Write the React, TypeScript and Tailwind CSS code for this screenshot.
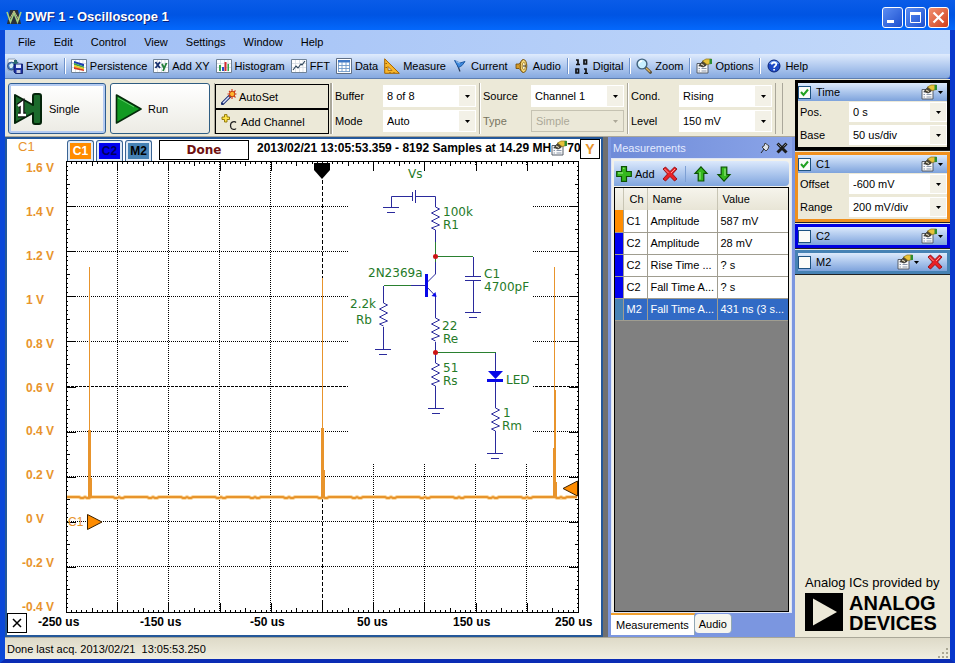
import { useState, type ReactNode } from "react";
import { clsx } from "clsx";

const toolbarItems: { label: string; icon: ReactNode; divider?: boolean }[] = [
  { label: "Export", icon: <ExportIcon /> },
  { label: "Persistence", icon: <PersistenceIcon />, divider: true },
  { label: "Add XY", icon: <XYIcon /> },
  { label: "Histogram", icon: <HistogramIcon /> },
  { label: "FFT", icon: <FftIcon /> },
  { label: "Data", icon: <DataIcon /> },
  { label: "Measure", icon: <MeasureIcon /> },
  { label: "Current", icon: <FlagIcon /> },
  { label: "Audio", icon: <AudioIcon /> },
  { label: "Digital", icon: <DigitalIcon />, divider: true },
  { label: "Zoom", icon: <ZoomIcon />, divider: true },
  { label: "Options", icon: <OptionsIcon />, divider: true },
  { label: "Help", icon: <HelpIcon />, divider: true },
];

const measurements = [
  { ch: "C1", name: "Amplitude", value: "587 mV", color: "bg-[#ff8c00]" },
  { ch: "C2", name: "Amplitude", value: "28 mV", color: "bg-[#0000f0]" },
  { ch: "C2", name: "Rise Time ...", value: "? s", color: "bg-[#0000f0]" },
  { ch: "C2", name: "Fall Time A...", value: "? s", color: "bg-[#0000f0]" },
  { ch: "M2", name: "Fall Time A...", value: "431 ns (3 s...", color: "bg-[#4682b4]" },
];

/* ---------- icons ---------- */

function Icon({ children }: { children: ReactNode }) {
  return (
    <svg viewBox="0 0 16 16" className="size-4 shrink-0" aria-hidden="true">
      {children}
    </svg>
  );
}

function ExportIcon() {
  return (
    <Icon>
      <path d="M1 1h7l2 2v9H1z" fill="#f4f7fb" stroke="#7d8fa8" strokeWidth=".8" />
      <circle cx="4.5" cy="8" r="4" fill="#4a7fc0" stroke="#1f3f77" strokeWidth=".7" />
      <path d="M2 7l3-2 2 2-2 3-2 0z" fill="#d6f0f4" />
      <path d="M7 6h8.5v9.5H8.5L7 14z" fill="#1c2fa0" stroke="#0a1660" strokeWidth=".8" />
      <path d="M9 6.5h5v3.5H9z" fill="#dfe6fb" />
      <path d="M9.5 12h4v3h-4z" fill="#c0c8e0" />
      <path d="M7 2h3v2h2l-3.5 2.5L5 4h2z" fill="#2b6a6e" />
    </Icon>
  );
}

function Frame({ children }: { children: ReactNode }) {
  return (
    <Icon>
      <path d="M.5 1.5h15v13H.5z" fill="#fff" stroke="#6f8297" />
      <path d="M4.5 2v12M8.5 2v12M12 2v12M1 5.5h14M1 9.5h14" stroke="#cfd6de" strokeWidth=".7" />
      {children}
    </Icon>
  );
}

function PersistenceIcon() {
  return (
    <Frame>
      <path d="M3 3l10 3v2.500L3 5z" fill="#1e3fb4" />
      <path d="M3 5l10 3.500V10L3 7z" fill="#3aa34a" />
      <path d="M3 7l10 3v1.500L3 9z" fill="#f2c81c" />
      <path d="M3 9l10 2.500V13L3 11z" fill="#d63a1e" />
    </Frame>
  );
}

function XYIcon() {
  return (
    <Frame>
      <path d="M2.5 4l4.5 6M7 4l-4.5 6" stroke="#18306e" strokeWidth="1.8" />
      <path d="M9 6l2 4M13.5 5l-3.5 8" stroke="#23803a" strokeWidth="1.8" />
    </Frame>
  );
}

function HistogramIcon() {
  return (
    <Frame>
      <path d="M3 7h2v6H3z" fill="#38a348" />
      <path d="M6 9h2v4H6z" fill="#2b51c9" />
      <path d="M8.5 4h2v9h-2z" fill="#d8292f" />
      <path d="M11.5 6h1.5v7h-1.5z" fill="#38a348" />
    </Frame>
  );
}

function FftIcon() {
  return (
    <Frame>
      <path d="M2 12l3-4 2 2 3-4 1 1 3-4" fill="none" stroke="#2c4358" strokeWidth="1.1" />
    </Frame>
  );
}

function DataIcon() {
  return (
    <Icon>
      <path d="M.5 .5h15v15H.5z" fill="#fff" stroke="#5f6f86" />
      <path d="M2 2h12v2.5H2z" fill="#3f79c8" />
      <path d="M2 7.5h12M2 10.5h12M2 13.5h12M2.5 4v10M6 4v10M10 4v10M13.5 4v10" stroke="#6f98c8" strokeWidth=".9" />
    </Icon>
  );
}

function MeasureIcon() {
  return (
    <Icon>
      <path d="M.7 .8L15.3 15.3H.7z" fill="#f8b62a" stroke="#a66400" />
      <path d="M4 8.5l4 4H4z" fill="#bcd4f8" stroke="#a66400" strokeWidth=".8" />
      <path d="M3 5.5h-1.5M3 9.5h-1.5M6 14v1M10 14v1" stroke="#7a4700" strokeWidth=".8" />
    </Icon>
  );
}

function FlagIcon() {
  return (
    <Icon>
      <path d="M4 3l4 10.5" stroke="#2a3c58" strokeWidth="1.2" />
      <path d="M2.5 2.5l5.5 2.5 5-1.500-3 4L6.500 9.500z" fill="#3f8be0" stroke="#16529d" strokeWidth=".9" />
      <path d="M4 3.5l4 1.7" stroke="#b8dcff" strokeWidth=".8" />
    </Icon>
  );
}

function AudioIcon() {
  return (
    <Icon>
      <path d="M2 6h3l4-4.5v13L5 10.5H2z" fill="#d59a28" stroke="#6e4700" strokeWidth=".8" />
      <ellipse cx="9.5" cy="8" rx="3.3" ry="6.5" fill="#f5d675" stroke="#6e4700" strokeWidth=".9" />
      <ellipse cx="9.8" cy="8" rx="1.6" ry="3.6" fill="#fff7d0" stroke="#8a6310" strokeWidth=".7" />
      <path d="M9 8h3" stroke="#333" />
    </Icon>
  );
}

function DigitalIcon() {
  return (
    <Icon>
      <path d="M2 2h2v4M10 11h2v4M2 6.500h4M10 15.500h4" fill="none" stroke="#111" strokeWidth="1.700" />
      <path d="M10 2h2.500v4H10zM2 11h2.500v4H2z" fill="none" stroke="#111" strokeWidth="1.700" />
    </Icon>
  );
}

function ZoomIcon() {
  return (
    <Icon>
      <path d="M9.5 9.5l5 4.8" stroke="#5e553f" strokeWidth="3" strokeLinecap="round" />
      <path d="M10 10l4 3.8" stroke="#e0b35a" strokeWidth="1.3" />
      <circle cx="6" cy="6" r="4.9" fill="#c9efff" stroke="#41617c" strokeWidth="1.4" />
      <path d="M3.2 5.5a3 3 0 0 1 3-2.5" stroke="#fff" strokeWidth="1.3" fill="none" />
    </Icon>
  );
}

function OptionsIcon() {
  return (
    <Icon>
      <path d="M1 5.5h11v9.5H1z" fill="#fafafa" stroke="#555c68" />
      <path d="M2.5 8h1.5M2.5 10.5h1.5M2.5 13h1.5M5.5 10.5h5M5.5 13h5" stroke="#8a97ab" />
      <path d="M3 7.5l4-4.5 4 1.5-1 3-3 1.5z" fill="#504936" stroke="#222" strokeWidth=".7" />
      <path d="M6.5 3L10 1h5.5v4.5L11 6.5z" fill="#e8c23a" stroke="#8c7312" strokeWidth=".7" />
      <path d="M13.5 1H16v5h-2.5z" fill="#2e8c33" />
      <path d="M5 6l3 1.5" stroke="#f3ead0" />
    </Icon>
  );
}

function HelpIcon() {
  return (
    <Icon>
      <circle cx="8" cy="8" r="6" fill="#1d48c4" stroke="#0a2478" />
      <path d="M3 6a5.5 5.5 0 0 1 10 0z" fill="#6f9bf2" />
      <path d="M5.8 6.5C5.8 3.8 10.5 3.8 10.3 6.4 10.2 7.8 8.1 8 8.1 9.7M8.1 11v1.6" fill="none" stroke="#fff" strokeWidth="1.7" />
    </Icon>
  );
}

function DeleteIcon() {
  return (
    <Icon>
      <path d="M1 3l2.5-2L8 5.5 12.5 1 15 3 10.5 8 15 13l-2.5 2L8 10.5 3.5 15 1 13 5.5 8z" fill="#ea2026" stroke="#8f0b10" strokeWidth=".9" />
      <path d="M2.5 3l4 4M13 3L9 7" stroke="#ff9a94" />
    </Icon>
  );
}

function PlusIcon() {
  return (
    <Icon>
      <path d="M5.5 .7h5v4.8h4.8v5h-4.800v4.800h-5v-4.800H.7v-5h4.800z" fill="#35b81e" stroke="#0d5204" strokeWidth="1.2" />
      <path d="M7 2.2h1.5M2 7h5" stroke="#a6f08f" />
    </Icon>
  );
}

function ArrowIcon({ down }: { down?: boolean }) {
  return (
    <Icon>
      <g transform={down ? "rotate(180 8 8)" : undefined}>
        <path d="M8 .8l6 6.5h-3.2V15H5.2V7.3H2z" fill="#35b81e" stroke="#0d5204" strokeWidth="1.2" />
        <path d="M7 6v7.5" stroke="#a6f08f" />
      </g>
    </Icon>
  );
}

function WandIcon() {
  return (
    <Icon>
      <path d="M1.5 14.5L8.5 7.5" stroke="#1d2f70" strokeWidth="3.2" strokeLinecap="round" />
      <path d="M2 14l6-6" stroke="#d7e2ff" strokeWidth="1.4" />
      <path d="M11 0v10M6.5 5h9M8 2l6.5 6.5M14.5 1.5L8 8" stroke="#d4381c" strokeWidth="1.1" />
      <circle cx="11.2" cy="5" r="2.7" fill="#ffb52e" stroke="#c23c10" />
    </Icon>
  );
}

function AddChannelIcon() {
  return (
    <Icon>
      <path d="M3.5 .6h2.5v2.4h2.5v2.5H6v2.5H3.5V5.5H1V3h2.5z" fill="#ffe64a" stroke="#8d7200" strokeWidth=".9" />
      <path d="M15 8.5c-1-1.2-5.5-1.5-5.5 3s4.5 4.5 5.5 3" fill="none" stroke="#222" strokeWidth="1.2" />
    </Icon>
  );
}

function LogoIcon() {
  return (
    <Icon>
      <path d="M4 1h8l3 14H1z" fill="#27313a" />
      <path d="M1 3l3.5 10L8 4l3.5 9L15 3" fill="none" stroke="#a3cf84" strokeWidth="1.6" />
      <path d="M3 11l5-9 5 9" fill="none" stroke="#e8d68c" strokeWidth=".8" />
    </Icon>
  );
}

function Caret() {
  return (
    <svg viewBox="0 0 5 3" className="h-[3px] w-[5px] shrink-0" aria-hidden="true">
      <path d="M0 0h5L2.5 3z" fill="currentColor" />
    </svg>
  );
}

/* ---------- controls ---------- */

function Combo({ label, options, disabled, compact }: { label: string; options: string[]; disabled?: boolean; compact?: boolean }) {
  return (
    <label className="flex items-center">
      <span className={clsx(compact ? "w-[51px] pl-0.5" : "w-12", disabled && "text-[#77745f]")}>{label}</span>
      <span className="relative min-w-0 flex-1">
        <select
          disabled={disabled}
          className={clsx(
            "block w-full appearance-none truncate pl-1 outline-none",
            compact ? "h-5" : "h-[22px]",
            disabled ? "border border-[#c5c2b2] bg-[#ebe8d8] text-[#aca899]" : "bg-white text-black"
          )}
        >
          {options.map((o) => (
            <option key={o}>{o}</option>
          ))}
        </select>
        <span
          className={clsx(
            "pointer-events-none absolute inset-y-px right-px flex w-4 items-center justify-center",
            disabled ? "text-[#aca899]" : "bg-[#f3f1e7]"
          )}
        >
          <Caret />
        </span>
      </span>
    </label>
  );
}

function ComboGroup({ children }: { children: ReactNode }) {
  return (
    <div className="flex w-[148px] flex-col justify-center gap-[3px] border-l border-[#aaa79a] px-[3px] shadow-[inset_1px_0_0_#fff]">
      {children}
    </div>
  );
}

interface ChannelPanelProps {
  label: string;
  frame: string;
  enabled?: boolean;
  removable?: boolean;
  children?: ReactNode;
}

function ChannelPanel({ label, frame, enabled = false, removable, children }: ChannelPanelProps) {
  const [checked, setChecked] = useState(enabled);
  return (
    <section className={clsx("border-[3px] bg-[#ece9d8] shadow-[0_1px_0_#222]", frame)}>
      <header className="flex h-[18px] items-center gap-1 bg-linear-to-b from-[#dceafc] to-[#7ea3dc] pr-1">
        <label className="flex flex-1 items-center gap-[5px]">
          <input type="checkbox" checked={checked} onChange={() => setChecked(!checked)} className="peer sr-only" />
          <span className="flex size-[13px] items-center justify-center border border-[#1d5281] bg-[#fbfbf8] text-[#21a121]">
            {checked && (
              <svg viewBox="0 0 9 9" className="size-[9px]" aria-hidden="true">
                <path d="M1 4l2.5 3L8 1.5" fill="none" stroke="currentColor" strokeWidth="2" />
              </svg>
            )}
          </span>
          {label}
        </label>
        <button aria-label={`${label} options`} className="flex items-center gap-px">
          <OptionsIcon />
          <Caret />
        </button>
        {removable && (
          <button aria-label={`Remove ${label}`} className="ml-1">
            <DeleteIcon />
          </button>
        )}
      </header>
      {children && <div className="flex flex-col gap-[3px] pt-px pb-0.5">{children}</div>}
    </section>
  );
}

/* ---------- plot ---------- */

const gridX = [66, 117, 168, 219, 270, 322, 373, 424, 475, 526, 578];
const gridY = [161, 206, 251, 296, 341, 386, 431, 476, 521, 566, 612];
const voltLabels = ["1.6 V", "1.4 V", "1.2 V", "1 V", "0.8 V", "0.6 V", "0.4 V", "0.2 V", "0 V", "-0.2 V", "-0.4 V"];
const timeLabels = [
  { text: "-250 us", x: 38 },
  { text: "-150 us", x: 140 },
  { text: "-50 us", x: 250 },
  { text: "50 us", x: 357 },
  { text: "150 us", x: 453 },
  { text: "250 us", x: 555 },
];

function tickPath() {
  let d = "";
  for (let i = 0; i <= 100; i++) {
    const x = Math.round(66 + i * 5.12) + 0.5;
    const y = Math.round(161 + i * 4.51) + 0.5;
    const len = i % 10 === 0 ? 10 : i % 5 === 0 ? 5 : 3;
    const side = i % 10 === 0 ? 10 : i % 5 === 0 ? 4 : 2;
    d += `M${x} 161v${len}M${x} 613v-${len}M66 ${y}h${side}M579 ${y}h-${side}`;
  }
  return d;
}

function tracePath() {
  let d = "M67 497";
  for (let x = 69; x <= 578; x += 2) {
    d += `L${x} ${497 + ((x * x * 3) % 17 > 11 ? 1 : 0)}`;
  }
  return d;
}

function Resistor({ x, y }: { x: number; y: number }) {
  return <path d={`M${x} ${y}l4 2-8 4 8 4-8 4 8 4-8 3 4 2`} fill="none" />;
}

function Ground({ x, y }: { x: number; y: number }) {
  return <path d={`M${x - 8} ${y}h16M${x - 4} ${y + 5}h8`} />;
}

function Circuit() {
  return (
    <g>
      <path d="M348 166h185v298H348z" fill="#fff" />
      <g stroke="#2a8030">
        <path d="M435.5 241v21M436 256.5h37M384 285.5h27M436 352.5h60" />
      </g>
      <g stroke="#2a2a9c" fill="none">
        <path d="M391.5 207v-10.5H412M412.5 192v9M415.5 190v13M416 196.5h19.5V207M435.5 230v12" />
        <path d="M473.5 257v19M465 276.5h16M465 280.5h16M473.5 281v31" />
        <path d="M435.5 262v12l-9 9M411 285.5h16M427 287l8.5 9V318M435.5 342v21M435.5 386v22" />
        <path d="M383.5 286v17M383.5 327v22M495.5 353v18M495.5 382v26M495.5 431v22" />
        <Ground x={391} y={207.5} />
        <Ground x={473} y={312.5} />
        <Ground x={383} y={349.5} />
        <Ground x={436} y={408.5} />
        <Ground x={495} y={453.5} />
        <Resistor x={435.5} y={207} />
        <Resistor x={383.5} y={303} />
        <Resistor x={435.5} y={318} />
        <Resistor x={435.5} y={363} />
        <Resistor x={495.5} y={408} />
      </g>
      <g fill="#0808e8">
        <path d="M425 274h3v23h-3zM488 371h15l-7.5 8zM487 379h16v3h-16z" />
        <path d="M436.5 297l-5-1 4-4z" />
      </g>
      <circle cx="435.5" cy="256.5" r="2.5" fill="#cc1414" />
      <circle cx="435.5" cy="352.5" r="2.5" fill="#cc1414" />
      <g fill="#257a28" className="font-['DejaVu_Sans'] text-[12px]">
        <text x="408" y="178">Vs</text>
        <text x="443" y="216">100k</text>
        <text x="443" y="229">R1</text>
        <text x="368" y="277">2N2369a</text>
        <text x="484" y="278">C1</text>
        <text x="484" y="291">4700pF</text>
        <text x="350" y="308">2.2k</text>
        <text x="356" y="324">Rb</text>
        <text x="442" y="330">22</text>
        <text x="443" y="343">Re</text>
        <text x="443" y="372">51</text>
        <text x="443" y="385">Rs</text>
        <text x="506" y="384">LED</text>
        <text x="503" y="417">1</text>
        <text x="502" y="430">Rm</text>
      </g>
    </g>
  );
}

function ScopePlot() {
  return (
    <svg viewBox="7 161 594 474" className="block h-auto w-full" role="img" aria-label="Channel 1 waveform">
      <g stroke="#000" strokeDasharray="1 1">
        {gridX.slice(1, -1).map((x) => (
          <path key={x} d={`M${x}.5 162V612`} strokeDasharray={x === 322 ? "4 2" : undefined} />
        ))}
        {gridY.slice(1, -1).map((y) => (
          <path key={y} d={`M67 ${y}.5H578`} strokeDasharray={y === 386 ? "3 1" : undefined} />
        ))}
      </g>
      <Circuit />
      <path d={tickPath()} stroke="#000" />
      <path d="M66.5 161.5h512v451h-512z" fill="none" stroke="#000" />

      <path d={tracePath()} fill="none" stroke="#fbdca8" strokeWidth="4" />
      <path d={tracePath()} fill="none" stroke="#e8942c" strokeWidth="2" />
      <g fill="#e8942c">
        <path d="M89 267h1v163h-1zM88 430h3v48h1v20h-4z" />
        <path d="M322 278h1v150h-1zM321 428h3v42h1v28h-4z" />
        <path d="M554 267h1v123h-1zM554 390h2v58h-2zM553 448h3v34h1v16h-4z" />
      </g>

      <path d="M314 163h16v7l-8 9-8-9z" />
      <g stroke="#3a2000" fill="#ff8c00">
        <path d="M87.5 514.5v15l14.5-7.5z" />
        <path d="M577.5 481v15l-14.5-7.5z" />
      </g>
      <text x="68" y="526" fill="#e8942c" className="text-[12px]">
        C1
      </text>

      <g className="text-[12px] font-bold">
        {voltLabels.map((v, i) => (
          <text key={v} x={v.startsWith("-") ? 22 : 26} y={172 + Math.round(i * 43.9)} fill="#e8942c">
            {v}
          </text>
        ))}
        {timeLabels.map((t) => (
          <text key={t.text} x={t.x} y="626">
            {t.text}
          </text>
        ))}
      </g>
    </svg>
  );
}

function ChannelToggle({ label, color }: { label: string; color: string }) {
  return (
    <button className="flex h-[21px] w-[27px] rounded-t-[3px] border border-b-0 border-[#3a6494] bg-[#dfeaf6] p-0.5">
      <span className={clsx("flex flex-1 items-center justify-center self-stretch text-xs font-bold", color)}>{label}</span>
    </button>
  );
}

function ScopeWindow() {
  return (
    <div className="relative flex min-w-0 flex-1 flex-col border-2 border-[#24589a] bg-white">
      <div className="flex h-[22px] items-end">
        <span className="w-[60px] self-start pl-[11px] text-[13px] leading-4 text-[#e8942c]">C1</span>
        <div className="flex gap-0.5">
          <ChannelToggle label="C1" color="bg-[#ff8c00] text-white" />
          <ChannelToggle label="C2" color="bg-[#0000f0] text-[#000060]" />
          <ChannelToggle label="M2" color="bg-[#4682b4] text-black" />
        </div>
        <div className="mb-px ml-[7px] flex h-5 w-[90px] items-center justify-center border border-black font-['DejaVu_Sans'] text-xs font-bold text-[#701010]">
          Done
        </div>
        <div className="ml-2 flex min-w-0 flex-1 items-center self-start overflow-hidden text-xs leading-[18px] font-bold whitespace-nowrap">
          2013/02/21 13:05:53.359 - 8192 Samples at 14.29 MH
          <button aria-label="Plot options" className="shrink-0">
            <OptionsIcon />
          </button>
          <span>70</span>
        </div>
        <button className="mr-px size-5 shrink-0 self-start border border-black text-sm leading-4 font-bold text-[#e8942c]">Y</button>
      </div>
      <ScopePlot />
      <button aria-label="X axis" className="absolute bottom-0.5 left-0 flex size-5 items-center justify-center border border-black bg-white">
        <svg viewBox="0 0 10 10" className="size-2.5" aria-hidden="true">
          <path d="M1 1l8 8M9 1L1 9" stroke="#000" strokeWidth="1.5" />
        </svg>
      </button>
    </div>
  );
}

function MeasurementsDock() {
  const [tab, setTab] = useState("Measurements");
  return (
    <aside className="flex w-[187px] shrink-0 flex-col bg-[#7b96e0] px-[3px]">
      <div className="flex h-[21px] items-center justify-between bg-linear-to-r from-[#6f8bd8] to-[#8aa4e8] pr-1 pl-0.5 text-[#e4ebff]">
        Measurements
        <div className="flex items-center gap-1.5">
          <button aria-label="Pin">
            <svg viewBox="0 0 10 12" className="h-3 w-2.5" aria-hidden="true">
              <path d="M5 1l4 3-1 3-2 2-4-4 2-1z" fill="#dfe3ea" stroke="#333" strokeWidth=".9" />
              <path d="M4 7l-3 4" stroke="#222" />
            </svg>
          </button>
          <button aria-label="Close panel">
            <svg viewBox="0 0 12 12" className="size-3" aria-hidden="true">
              <path d="M1.5 1.5l9 9M10.5 1.5l-9 9" stroke="#1c1c1c" strokeWidth="3" />
              <path d="M2 2l3 3M10 2L7.5 4.5" stroke="#98a0ae" strokeWidth=".8" />
            </svg>
          </button>
        </div>
      </div>
      <div className="flex flex-1 flex-col border border-[#dfe6f6] bg-[#f2f1ea] px-0.5 pt-0.5">
        <div className="flex h-[25px] items-center gap-[7px] rounded-r-sm bg-linear-to-b from-[#dce9fc] to-[#80a5de] px-0.5">
          <button className="flex items-center gap-[3px]">
            <PlusIcon />
            Add
          </button>
          <button aria-label="Delete measurement">
            <DeleteIcon />
          </button>
          <span className="h-4 w-px bg-[#7d9fd4]" />
          <button aria-label="Move up">
            <ArrowIcon />
          </button>
          <button aria-label="Move down">
            <ArrowIcon down />
          </button>
        </div>
        <div className="mt-px flex-1 border border-black bg-[#808080]">
          <table className="w-full table-fixed border-collapse">
            <colgroup>
              <col className="w-2" />
              <col className="w-6" />
              <col className="w-[70px]" />
              <col />
            </colgroup>
            <thead>
              <tr className="h-[22px] bg-linear-to-b from-[#f6f4ec] to-[#e8e5d6] text-left">
                <th aria-label="Colour" />
                <th className="border-l border-[#c8c5b4] pl-1.5 font-normal">Ch</th>
                <th className="border-l border-[#c8c5b4] pl-[5px] font-normal">Name</th>
                <th className="border-l border-[#c8c5b4] pl-[5px] font-normal">Value</th>
              </tr>
            </thead>
            <tbody>
              {measurements.map((m, i) => (
                <tr
                  key={i}
                  className={clsx(
                    "h-[22px] border-b border-[#a09d90] whitespace-nowrap",
                    i === 4 ? "bg-[#316ac5] text-white" : "bg-white"
                  )}
                >
                  <td className={m.color} />
                  <td className="border-l border-[#a09d90] pl-[3px]">{m.ch}</td>
                  <td className="overflow-hidden border-l border-[#a09d90] pl-[3px]">{m.name}</td>
                  <td className="overflow-hidden border-l border-[#a09d90] pl-[3px]">{m.value}</td>
                </tr>
              ))}
            </tbody>
          </table>
        </div>
      </div>
      <div role="tablist" className="flex h-6 items-start">
        {["Measurements", "Audio"].map((t) => (
          <button
            key={t}
            role="tab"
            aria-selected={tab === t}
            onClick={() => setTab(t)}
            className={clsx(
              "border-r border-[#91a7b4]",
              tab === t ? "h-[22px] border-t-2 border-t-[#f0a030] bg-white px-[5px]" : "mt-px h-[19px] rounded-sm bg-[#f6f5ef] px-1"
            )}
          >
            {t}
          </button>
        ))}
      </div>
    </aside>
  );
}

function ControlBar() {
  return (
    <div className="flex h-[58px] shrink-0 border-b border-[#aaa79a] pt-1 pb-0.5">
      <div className="flex gap-1 pr-1 pl-[3px]">
        <button className="flex w-[98px] items-center gap-1.5 rounded-[3px] border border-[#2f5d92] bg-linear-to-b from-white to-[#ecebe4] pl-1 shadow-[inset_0_0_0_2px_#b4cbf2]">
          <svg viewBox="0 0 30 34" className="h-[34px] w-[30px]" aria-hidden="true">
            <path d="M2 3l18 10V4q0-2 2-2h4q2 0 2 2v26q0 2-2 2h-4q-2 0-2-2v-9L2 31z" fill="#1c6b2c" stroke="#04240a" strokeWidth="2" strokeLinejoin="round" />
            <path d="M5 14l4-3v12M5 23h8" fill="none" stroke="#111" strokeWidth="5" />
            <path d="M5 14l4-3v12M5 23h8" fill="none" stroke="#fff" strokeWidth="2.5" />
          </svg>
          Single
        </button>
        <button className="flex w-[100px] items-center gap-1.5 rounded-[3px] border border-[#2f5d82] bg-linear-to-b from-white to-[#ecebe4] pl-1">
          <svg viewBox="0 0 27 32" className="h-8 w-[27px]" aria-hidden="true">
            <path d="M1.5 2L26 16 1.5 30z" fill="#129a22" stroke="#052c0b" strokeWidth="1.6" strokeLinejoin="round" />
            <path d="M3 5l16 9" stroke="#5cc965" />
          </svg>
          Run
        </button>
      </div>
      <div className="flex w-[117px] flex-col border-x border-[#aaa79a] pt-px pr-px">
        <button className="flex flex-1 items-center gap-0.5 border border-black pl-[5px]">
          <WandIcon />
          AutoSet
        </button>
        <button className="flex flex-1 items-center gap-1 border border-black pl-[5px]">
          <AddChannelIcon />
          Add Channel
        </button>
      </div>
      <ComboGroup>
        <Combo label="Buffer" options={["8 of 8"]} />
        <Combo label="Mode" options={["Auto", "Normal", "None"]} />
      </ComboGroup>
      <ComboGroup>
        <Combo label="Source" options={["Channel 1", "Channel 2"]} />
        <Combo label="Type" options={["Simple"]} disabled />
      </ComboGroup>
      <ComboGroup>
        <Combo label="Cond." options={["Rising", "Falling"]} />
        <Combo label="Level" options={["150 mV"]} />
      </ComboGroup>
      <div className="w-2 border-x border-[#aaa79a]" />
    </div>
  );
}

function SidePanel() {
  return (
    <aside className="flex w-[155px] shrink-0 flex-col gap-0.5 bg-[#ece9d8] pt-px">
      <ChannelPanel label="Time" frame="border-black" enabled>
        <Combo compact label="Pos." options={["0 s"]} />
        <Combo compact label="Base" options={["50 us/div"]} />
      </ChannelPanel>
      <ChannelPanel label="C1" frame="border-[#f0901e]" enabled>
        <Combo compact label="Offset" options={["-600 mV"]} />
        <Combo compact label="Range" options={["200 mV/div"]} />
      </ChannelPanel>
      <ChannelPanel label="C2" frame="border-[#0000e0]" />
      <ChannelPanel label="M2" frame="border-[#4682b4]" removable />
      <div className="mt-auto pb-1 pl-2.5">
        <p className="text-[13px] leading-5">Analog ICs provided by</p>
        <div className="flex gap-1.5">
          <svg viewBox="0 0 38 38" className="size-[38px] shrink-0" aria-hidden="true">
            <path d="M0 0h38v38H0z" />
            <path d="M8 5.5v27L32 19z" fill="#ece9d8" />
          </svg>
          <p className="text-xl leading-5 font-bold">
            ANALOG
            <br />
            DEVICES
          </p>
        </div>
      </div>
    </aside>
  );
}

function TitleBar() {
  const button = "flex size-[21px] items-center justify-center rounded-[3px] border border-white";
  return (
    <header className="flex h-[30px] items-center gap-[3px] bg-linear-to-b from-[#0a5ce8] via-[#0054e3] to-[#0468fc] pt-1 pr-1.5 pl-1.5 text-white">
      <LogoIcon />
      <h1 className="flex-1 text-[13px] font-bold [text-shadow:1px_1px_#0b1f7a]">DWF 1 - Oscilloscope 1</h1>
      <div className="flex gap-0.5">
        <button aria-label="Minimize" className={clsx(button, "bg-linear-to-br from-[#5b8cf2] to-[#1c4fcf]")}>
          <svg viewBox="0 0 13 13" className="size-[13px]" aria-hidden="true">
            <path d="M1 9h7v3H1z" fill="#fff" />
          </svg>
        </button>
        <button aria-label="Maximize" className={clsx(button, "bg-linear-to-br from-[#5b8cf2] to-[#1c4fcf]")}>
          <svg viewBox="0 0 13 13" className="size-[13px]" aria-hidden="true">
            <path d="M1.5 2v9.5h10V2" fill="none" stroke="#fff" />
            <path d="M1 1h11v3H1z" fill="#fff" />
          </svg>
        </button>
        <button aria-label="Close" className={clsx(button, "bg-linear-to-br from-[#f09070] to-[#d03c14]")}>
          <svg viewBox="0 0 13 13" className="size-[13px]" aria-hidden="true">
            <path d="M1.5 1.5l10 10M11.5 1.5l-10 10" stroke="#fff" strokeWidth="2.2" />
          </svg>
        </button>
      </div>
    </header>
  );
}

export default function App() {
  return (
    <div className="flex min-h-screen flex-col bg-[#0a3fd0] font-['Liberation_Sans',Arial,sans-serif] text-[11px] leading-4 text-black">
      <TitleBar />
      <div className="flex flex-1 flex-col border-r-[5px] border-b-4 border-l-[5px] border-r-[#0838cc] border-b-[#0a2cb4] border-l-[#0a48d8]">
        <nav className="flex h-6 shrink-0 items-center gap-[18px] bg-linear-to-r from-[#9ebdf5] to-[#c4dafa] pl-[13px]">
          {["File", "Edit", "Control", "View", "Settings", "Window", "Help"].map((m) => (
            <button key={m}>{m}</button>
          ))}
        </nav>
        <div className="flex h-[25px] shrink-0 items-center gap-1.5 rounded-br-sm border-b border-[#5f7fb0] bg-linear-to-b from-[#dfebfd] to-[#86a9e0] pl-0.5">
          {toolbarItems.map((t) => (
            <button
              key={t.label}
              className={clsx(
                "flex items-center gap-[3px] whitespace-nowrap",
                t.divider && "border-l border-[#6f93cc] pl-1.5 shadow-[inset_1px_0_0_#fff]"
              )}
            >
              {t.icon}
              {t.label}
            </button>
          ))}
        </div>
        <div className="flex flex-1">
          <div className="flex min-w-0 flex-1 flex-col bg-[#ece9d8]">
            <ControlBar />
            <div className="flex flex-1">
              <ScopeWindow />
              <div className="w-[5px] shrink-0 bg-[#707070]" />
              <MeasurementsDock />
            </div>
          </div>
          <SidePanel />
        </div>
        <footer className="flex h-[22px] shrink-0 items-center justify-between border-t border-[#a9a798] bg-linear-to-b from-[#dedac8] to-[#f0eee0] pl-0.5">
          <span className="whitespace-pre">Done last acq. 2013/02/21  13:05:53.250</span>
          <svg viewBox="0 0 12 12" className="size-3 self-end" aria-hidden="true">
            <path d="M8 1h2v2H8zM4 5h2v2H4zM8 5h2v2H8zM0 9h2v2H0zM4 9h2v2H4zM8 9h2v2H8z" fill="#aaa794" />
          </svg>
        </footer>
      </div>
    </div>
  );
}
